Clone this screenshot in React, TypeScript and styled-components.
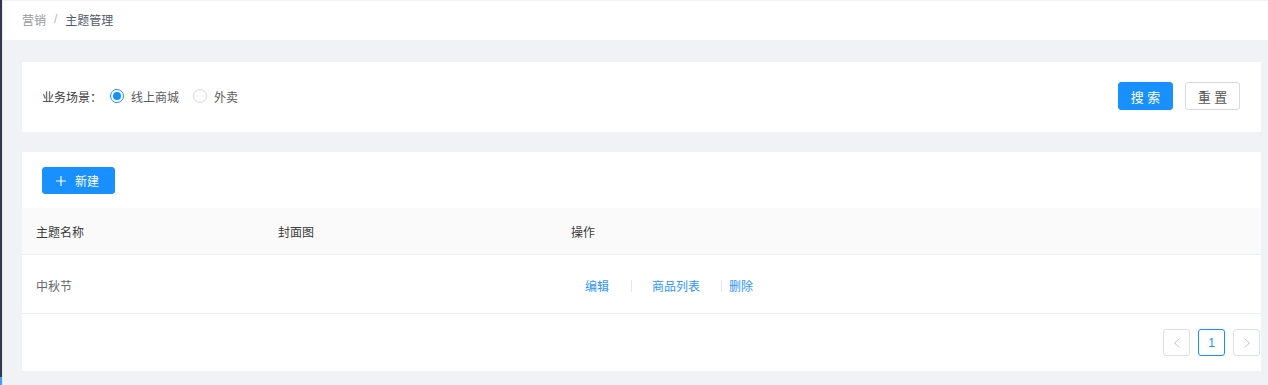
import React from "react";
import styled, { createGlobalStyle } from "styled-components";

const Global = createGlobalStyle`
  html, body { margin: 0; padding: 0; }
  body {
    width: 1268px;
    height: 385px;
    overflow: hidden;
    background: #f0f2f5;
    font-family: "Helvetica Neue", "Liberation Sans", "Noto Sans CJK SC", sans-serif;
    font-size: 12px;
    color: #333;
  }
  * { box-sizing: border-box; }
`;

const Shell = styled.div`
  display: flex;
  height: 385px;
`;

const SideEdge = styled.div`
  width: 2px;
  display: flex;
  flex-direction: column;
  background: #2f3b4c;
`;

const SideFill = styled.div`
  flex: 1;
`;

const SideActive = styled.div`
  height: 8px;
  background: #409eff;
`;

const Content = styled.div`
  flex: 1;
  display: flex;
  flex-direction: column;
  border-left: 1px solid #e6e8eb;
`;

const Header = styled.div`
  height: 40px;
  background: #fff;
  border-top: 1px solid #f2f3f5;
  display: flex;
  align-items: center;
  padding-left: 19px;
  padding-bottom: 3px;
`;

const Crumb = styled.span<{ $current?: boolean }>`
  color: ${(p) => (p.$current ? "#515a6e" : "#979aa0")};
`;

const CrumbSep = styled.span`
  color: #b4b7bc;
  margin: 0 8px;
`;

const Main = styled.div`
  display: flex;
  flex-direction: column;
  gap: 20px;
  padding: 22px 7px 0 19px;
`;

const Card = styled.div`
  background: #fff;
`;

const SearchCard = styled(Card)`
  height: 70px;
  display: flex;
  align-items: center;
  padding: 0 21px 2px 20px;
`;

const FieldLabel = styled.span`
  color: #3d3d3d;
  margin-right: 8px;
`;

const RadioGroup = styled.div`
  display: flex;
  align-items: center;
  gap: 14px;
`;

const RadioItem = styled.label`
  display: flex;
  align-items: center;
  gap: 7px;
  color: #5a5a5a;
`;

const RadioDot = styled.span<{ $checked?: boolean }>`
  width: 14px;
  height: 14px;
  border-radius: 50%;
  border: 1px solid ${(p) => (p.$checked ? "#1890ff" : "#d9d9d9")};
  display: flex;
  align-items: center;
  justify-content: center;
  &::after {
    content: "";
    width: 8px;
    height: 8px;
    border-radius: 50%;
    background: ${(p) => (p.$checked ? "#1890ff" : "transparent")};
  }
`;

const Spacer = styled.div`
  flex: 1;
`;

const Button = styled.button<{ $primary?: boolean }>`
  height: 28px;
  width: 55px;
  padding: 0;
  border-radius: 3px;
  font-family: inherit;
  font-size: 13px;
  display: inline-flex;
  align-items: center;
  justify-content: center;
  gap: 9px;
  cursor: pointer;
  border: 1px solid ${(p) => (p.$primary ? "#1890ff" : "#d9d9d9")};
  background: ${(p) => (p.$primary ? "#1890ff" : "#fff")};
  color: ${(p) => (p.$primary ? "#fff" : "#555")};
  & + & {
    margin-left: 12px;
  }
`;

const NewButton = styled(Button)`
  height: 27px;
  width: 73px;
  font-size: 12px;
  padding-right: 2px;
`;

const TableCard = styled(Card)`
  display: flex;
  flex-direction: column;
  padding-top: 15px;
`;

const Toolbar = styled.div`
  padding: 0 20px 14px;
  display: flex;
`;

const Row = styled.div<{ $head?: boolean }>`
  display: grid;
  grid-template-columns: 242px 293px 1fr;
  align-items: center;
  height: ${(p) => (p.$head ? "47px" : "59px")};
  background: ${(p) => (p.$head ? "#fafafa" : "#fff")};
  border-bottom: 1px solid #ebeef5;
  padding-top: ${(p) => (p.$head ? "0" : "3px")};
`;

const Cell = styled.div<{ $head?: boolean }>`
  padding-left: 14px;
  color: ${(p) => (p.$head ? "#3a3a3a" : "#666")};
`;

const Actions = styled.div`
  display: flex;
  align-items: center;
  padding-left: 28px;
`;

const LinkBtn = styled.a`
  color: #2f95ff;
  cursor: pointer;
`;

const VDivider = styled.span<{ $l: number; $r: number }>`
  width: 1px;
  height: 12px;
  background: #e4e6ea;
  margin: 0 ${(p) => p.$r}px 0 ${(p) => p.$l}px;
`;

const Pager = styled.div`
  display: flex;
  justify-content: flex-end;
  gap: 8px;
  padding: 15px 1px 15px 0;
`;

const PageBtn = styled.div<{ $active?: boolean }>`
  width: 27px;
  height: 27px;
  border-radius: 3px;
  border: 1px solid ${(p) => (p.$active ? "#1890ff" : "#dcdfe6")};
  color: ${(p) => (p.$active ? "#1890ff" : "#c0c4cc")};
  display: flex;
  align-items: center;
  justify-content: center;
  font-size: 12px;
`;

const Chevron = ({ dir }: { dir: "left" | "right" }) => (
  <svg width="10" height="12" viewBox="0 0 10 12" fill="none">
    <path
      d={dir === "left" ? "M7.5 1.5 L2.5 6 L7.5 10.5" : "M2.5 1.5 L7.5 6 L2.5 10.5"}
      stroke="#c0c4cc"
      strokeWidth="1"
    />
  </svg>
);

const Plus = () => (
  <svg width="10" height="10" viewBox="0 0 10 10">
    <path d="M5 0 V10 M0 5 H10" stroke="#fff" strokeWidth="1.2" />
  </svg>
);

export default function App() {
  return (
    <>
      <Global />
      <Shell>
        <SideEdge>
          <SideFill />
          <SideActive />
        </SideEdge>
        <Content>
          <Header>
            <Crumb>营销</Crumb>
            <CrumbSep>/</CrumbSep>
            <Crumb $current>主题管理</Crumb>
          </Header>
          <Main>
            <SearchCard>
              <FieldLabel>业务场景：</FieldLabel>
              <RadioGroup>
                <RadioItem>
                  <RadioDot $checked />
                  线上商城
                </RadioItem>
                <RadioItem>
                  <RadioDot />
                  外卖
                </RadioItem>
              </RadioGroup>
              <Spacer />
              <Button $primary>搜 索</Button>
              <Button>重 置</Button>
            </SearchCard>
            <TableCard>
              <Toolbar>
                <NewButton $primary>
                  <Plus />
                  新建
                </NewButton>
              </Toolbar>
              <Row $head>
                <Cell $head>主题名称</Cell>
                <Cell $head>封面图</Cell>
                <Cell $head>操作</Cell>
              </Row>
              <Row>
                <Cell>中秋节</Cell>
                <Cell />
                <Actions>
                  <LinkBtn>编辑</LinkBtn>
                  <VDivider $l={22} $r={20} />
                  <LinkBtn>商品列表</LinkBtn>
                  <VDivider $l={21} $r={7} />
                  <LinkBtn>删除</LinkBtn>
                </Actions>
              </Row>
              <Pager>
                <PageBtn>
                  <Chevron dir="left" />
                </PageBtn>
                <PageBtn $active>1</PageBtn>
                <PageBtn>
                  <Chevron dir="right" />
                </PageBtn>
              </Pager>
            </TableCard>
          </Main>
        </Content>
      </Shell>
    </>
  );
}
